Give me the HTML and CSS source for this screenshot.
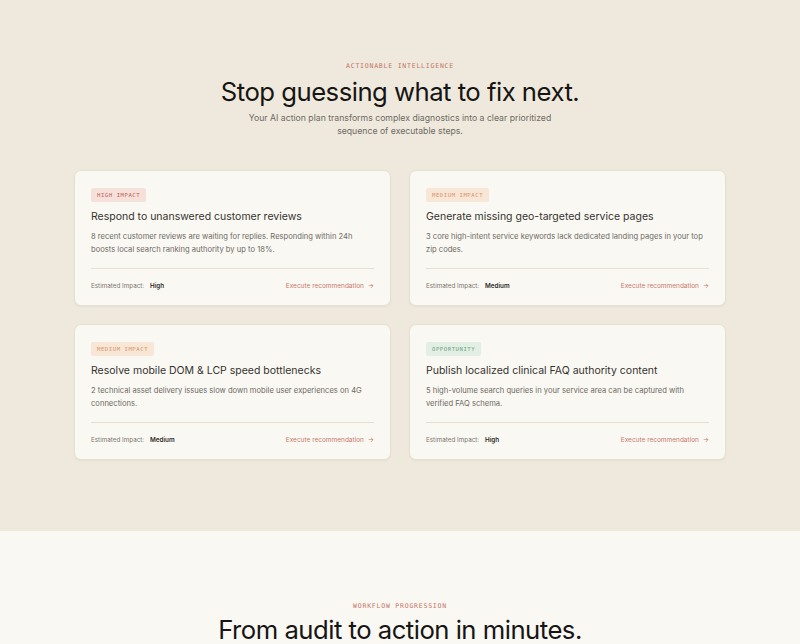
FILE: index.html
```html
<!DOCTYPE html>
<html lang="en">
<head>
<meta charset="utf-8">
<title>Actionable Intelligence</title>
<link rel="stylesheet" href="styles.css">
</head>
<body>
<section class="intel">
  <div class="eyebrow">ACTIONABLE INTELLIGENCE</div>
  <h1 class="heading">Stop guessing what to fix next.</h1>
  <p class="sub">Your AI action plan transforms complex diagnostics into a clear prioritized sequence of executable steps.</p>
  <div class="grid">
    <article class="card">
      <span class="badge badge-high">HIGH IMPACT</span>
      <h2 class="card-title">Respond to unanswered customer reviews</h2>
      <p class="card-desc">8 recent customer reviews are waiting for replies. Responding within 24h boosts local search ranking authority by up to 18%.</p>
      <div class="card-foot">
        <span class="est">Estimated Impact: <b>High</b></span>
        <a class="exec" href="#">Execute recommendation <span class="arrow">&rarr;</span></a>
      </div>
    </article>
    <article class="card">
      <span class="badge badge-med">MEDIUM IMPACT</span>
      <h2 class="card-title">Generate missing geo-targeted service pages</h2>
      <p class="card-desc">3 core high-intent service keywords lack dedicated landing pages in your top zip codes.</p>
      <div class="card-foot">
        <span class="est">Estimated Impact: <b>Medium</b></span>
        <a class="exec" href="#">Execute recommendation <span class="arrow">&rarr;</span></a>
      </div>
    </article>
    <article class="card">
      <span class="badge badge-med">MEDIUM IMPACT</span>
      <h2 class="card-title">Resolve mobile DOM &amp; LCP speed bottlenecks</h2>
      <p class="card-desc">2 technical asset delivery issues slow down mobile user experiences on 4G connections.</p>
      <div class="card-foot">
        <span class="est">Estimated Impact: <b>Medium</b></span>
        <a class="exec" href="#">Execute recommendation <span class="arrow">&rarr;</span></a>
      </div>
    </article>
    <article class="card">
      <span class="badge badge-opp">OPPORTUNITY</span>
      <h2 class="card-title">Publish localized clinical FAQ authority content</h2>
      <p class="card-desc">5 high-volume search queries in your service area can be captured with verified FAQ schema.</p>
      <div class="card-foot">
        <span class="est">Estimated Impact: <b>High</b></span>
        <a class="exec" href="#">Execute recommendation <span class="arrow">&rarr;</span></a>
      </div>
    </article>
  </div>
</section>
<section class="workflow">
  <div class="eyebrow">WORKFLOW PROGRESSION</div>
  <h1 class="heading heading-tight">From audit to action in minutes.</h1>
</section>
</body>
</html>
```

FILE: styles.css
```css
* { box-sizing: border-box; }
html, body { margin: 0; padding: 0; }
body {
  font-family: Inter, "Noto Sans", "Liberation Sans", sans-serif;
  color: #1c1b19;
  background: #faf8f3;
}
.intel {
  background: #efe9dd;
  padding: 62px 0 71px;
  display: flex;
  flex-direction: column;
  align-items: center;
}
.eyebrow {
  font-family: "DejaVu Sans Mono", "Liberation Mono", monospace;
  font-size: 6.5px;
  letter-spacing: 0.12em;
  color: #c4735f;
  line-height: 9px;
}
.heading {
  margin: 5px 0 0;
  font-size: 25.7px;
  font-weight: 400;
  letter-spacing: -0.02em;
  line-height: 32px;
  color: #161513;
  text-align: center;
}
.heading-tight { margin-top: 3px; }
.sub {
  margin: 4px 0 0;
  width: 320px;
  text-align: center;
  font-size: 8.7px;
  line-height: 13px;
  color: #6e6a63;
}
.grid {
  margin-top: 32px;
  width: 652px;
  display: grid;
  grid-template-columns: 1fr 1fr;
  gap: 18px;
}
.card {
  background: #faf8f3;
  border: 1px solid #e6e0d3;
  border-radius: 7px;
  box-shadow: 0 1px 2px rgba(80, 60, 30, 0.06);
  padding: 17px 16px 14px;
  display: flex;
  flex-direction: column;
  align-items: flex-start;
  min-height: 136px;
}
.badge {
  font-family: "DejaVu Sans Mono", "Liberation Mono", monospace;
  font-size: 5.6px;
  letter-spacing: 0.1em;
  line-height: 14px;
  padding: 0 6px;
  border-radius: 2px;
}
.badge-high { background: #f5e0da; color: #bd5f55; }
.badge-med { background: #f8e6d6; color: #d9956a; }
.badge-opp { background: #e3efe4; color: #6aa37e; }
.card-title {
  margin: 8px 0 0;
  font-size: 10.5px;
  font-weight: 400;
  line-height: 14px;
  color: #35332f;
}
.card-desc {
  margin: 6px 0 0;
  font-size: 7.6px;
  line-height: 13px;
  color: #6e6a63;
}
.card-foot {
  margin-top: auto;
  width: 100%;
  border-top: 1px solid #e6e0d4;
  padding-top: 12px;
  display: flex;
  justify-content: space-between;
  align-items: center;
  font-size: 6.3px;
  line-height: 10px;
}
.est { color: #7a766f; }
.est b { color: #2e2c29; font-weight: 600; margin-left: 4px; }
.exec { color: #c8786a; text-decoration: none; font-size: 6.5px; }
.arrow { margin-left: 2px; }
.workflow {
  padding: 71px 0 0;
  display: flex;
  flex-direction: column;
  align-items: center;
  height: 200px;
}
```
